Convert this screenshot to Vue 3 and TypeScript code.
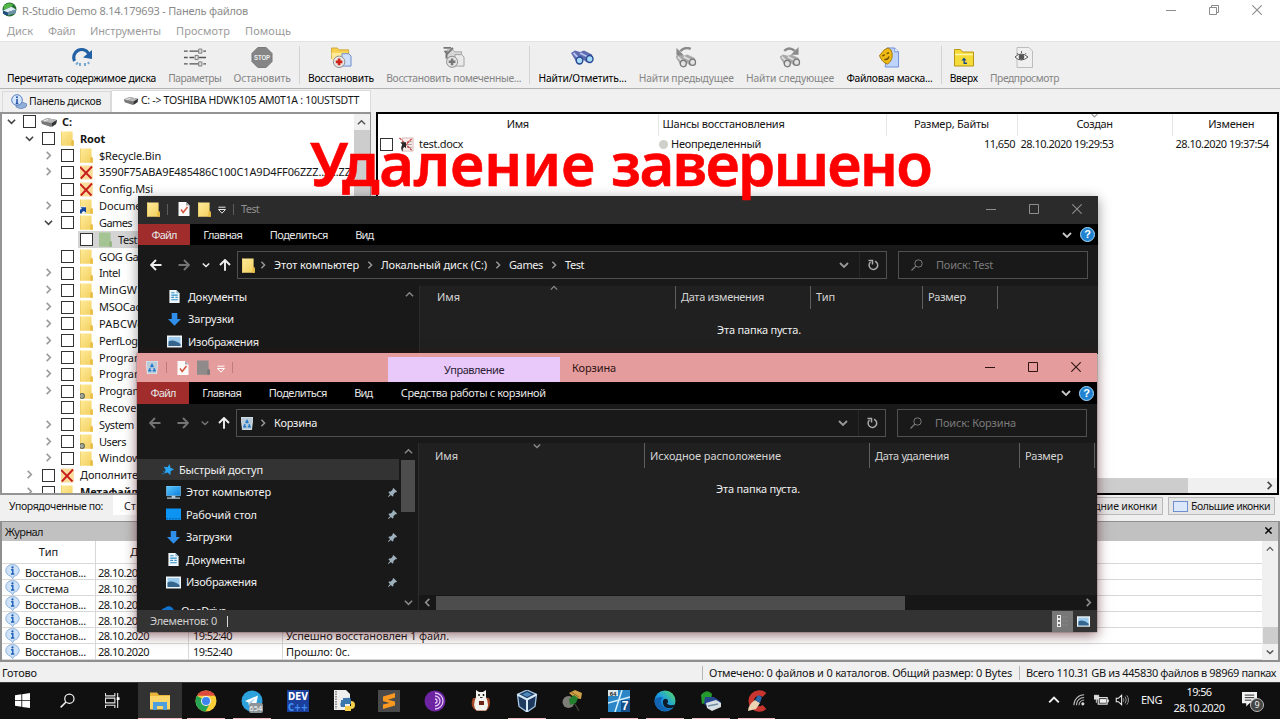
<script setup lang="ts">
interface TreeRow { name: string; level: number; icon: string; arrow: '' | 'open' | 'closed'; bold?: boolean; selected?: boolean; w?: number }
interface Tool { icon: string; label: string; w: number; off?: boolean; sep?: boolean }
interface NavItem { icon: string; name: string; w: number; top?: boolean; cut?: boolean }
interface Column { name: string; w: number }
interface Explorer {
  id: string; title: string; titleW: number; logo: string; qat: string
  context: boolean; crumbs: Column[]; search: string; searchW: number
  nav: NavItem[]; cols: Column[]; back: boolean
}

// Tracks a label so that it occupies the given width in pixels.
const vFit = {
  mounted(el: HTMLElement, binding: { value?: number }) {
    if (!binding.value) return
    const count = (el.textContent ?? '').trim().length
    const range = document.createRange()
    range.selectNodeContents(el)
    const natural = range.getBoundingClientRect().width
    el.style.letterSpacing = `${(binding.value - natural) / count}px`
  },
}

const menu: Column[] = [
  { name: 'Диск', w: 26 }, { name: 'Файл', w: 27 }, { name: 'Инструменты', w: 71 },
  { name: 'Просмотр', w: 54 }, { name: 'Помощь', w: 46 },
]

const tools: Tool[] = [
  { icon: 'refresh-blue', label: 'Перечитать содержимое диска', w: 149 },
  { icon: 'sliders', label: 'Параметры', w: 53, off: true },
  { icon: 'stop', label: 'Остановить', w: 57, off: true },
  { icon: 'recover', label: 'Восстановить', w: 66, sep: true },
  { icon: 'recover-marked', label: 'Восстановить помеченные...', w: 135, off: true },
  { icon: 'binoculars', label: 'Найти/Отметить...', w: 88, sep: true },
  { icon: 'find-prev', label: 'Найти предыдущее', w: 95, off: true },
  { icon: 'find-next', label: 'Найти следующее', w: 88, off: true },
  { icon: 'mask', label: 'Файловая маска...', w: 86 },
  { icon: 'up-folder', label: 'Вверх', w: 28, sep: true },
  { icon: 'preview', label: 'Предпросмотр', w: 69, off: true },
]

const tree: TreeRow[] = [
  { name: 'C:', level: 0, icon: 'drive', arrow: 'open', bold: true, w: 10 },
  { name: 'Root', level: 1, icon: 'folder', arrow: 'open', bold: true, w: 25 },
  { name: '$Recycle.Bin', level: 2, icon: 'folder', arrow: 'closed', w: 62 },
  { name: '3590F75ABA9E485486C100C1A9D4FF06ZZZ..Z...ZZZ', level: 2, icon: 'deleted', arrow: 'closed', w: 258 },
  { name: 'Config.Msi', level: 2, icon: 'deleted', arrow: '', w: 54 },
  { name: 'Documents', level: 2, icon: 'folder-link', arrow: 'closed', w: 58 },
  { name: 'Games', level: 2, icon: 'folder', arrow: 'open', w: 33 },
  { name: 'Test', level: 3, icon: 'folder-green', arrow: '', selected: true, w: 19 },
  { name: 'GOG Games', level: 2, icon: 'folder', arrow: '', w: 60 },
  { name: 'Intel', level: 2, icon: 'folder', arrow: 'closed', w: 21 },
  { name: 'MinGW', level: 2, icon: 'folder', arrow: 'closed', w: 38 },
  { name: 'MSOCache', level: 2, icon: 'folder', arrow: 'closed', w: 54 },
  { name: 'PABCWork', level: 2, icon: 'folder', arrow: 'closed', w: 56 },
  { name: 'PerfLogs', level: 2, icon: 'folder', arrow: 'closed', w: 44 },
  { name: 'Program Files', level: 2, icon: 'folder', arrow: 'closed', w: 71 },
  { name: 'Program Files', level: 2, icon: 'folder', arrow: 'closed', w: 71 },
  { name: 'ProgramData', level: 2, icon: 'folder-gear', arrow: 'closed', w: 67 },
  { name: 'Recovery', level: 2, icon: 'folder', arrow: '', w: 48 },
  { name: 'System', level: 2, icon: 'folder', arrow: 'closed', w: 35 },
  { name: 'Users', level: 2, icon: 'folder-gear', arrow: 'closed', w: 27 },
  { name: 'Windows', level: 2, icon: 'folder', arrow: 'closed', w: 47 },
  { name: 'Дополнительные', level: 1, icon: 'deleted', arrow: 'closed', w: 91 },
  { name: 'Метафайлы', level: 1, icon: 'folder', arrow: 'closed', bold: true, w: 67 },
]

const log = [
  { kind: 'Восстанов...', w: 61, time: '', text: '', tw: 0 },
  { kind: 'Система', w: 44, time: '', text: '', tw: 0 },
  { kind: 'Восстанов...', w: 61, time: '', text: '', tw: 0 },
  { kind: 'Восстанов...', w: 61, time: '', text: '', tw: 0 },
  { kind: 'Восстанов...', w: 61, time: '19:52:40', text: 'Успешно восстановлен 1 файл.', tw: 163 },
  { kind: 'Восстанов...', w: 61, time: '19:52:40', text: 'Прошло: 0с.', tw: 64 },
]

const explorers: Explorer[] = [
  {
    id: 'test', title: 'Test', titleW: 18, logo: 'folder', qat: 'folder', context: false, back: true,
    crumbs: [{ name: 'Этот компьютер', w: 85 }, { name: 'Локальный диск (C:)', w: 106 }, { name: 'Games', w: 34 }, { name: 'Test', w: 19 }],
    search: 'Поиск: Test', searchW: 57,
    nav: [{ icon: 'doc', name: 'Документы', w: 59 }, { icon: 'download', name: 'Загрузки', w: 46 }, { icon: 'picture', name: 'Изображения', w: 71 }],
    cols: [{ name: 'Имя', w: 23 }, { name: 'Дата изменения', w: 83 }, { name: 'Тип', w: 19 }, { name: 'Размер', w: 38 }],
  },
  {
    id: 'bin', title: 'Корзина', titleW: 44, logo: 'bin', qat: 'folder-gray', context: true, back: false,
    crumbs: [{ name: 'Корзина', w: 43 }],
    search: 'Поиск: Корзина', searchW: 81,
    nav: [
      { icon: 'star', name: 'Быстрый доступ', w: 84, top: true },
      { icon: 'computer', name: 'Этот компьютер', w: 85 },
      { icon: 'desktop', name: 'Рабочий стол', w: 71 },
      { icon: 'download', name: 'Загрузки', w: 46 },
      { icon: 'doc', name: 'Документы', w: 59 },
      { icon: 'picture', name: 'Изображения', w: 71 },
      { icon: 'cloud', name: 'OneDrive', w: 45, cut: true },
    ],
    cols: [{ name: 'Имя', w: 23 }, { name: 'Исходное расположение', w: 131 }, { name: 'Дата удаления', w: 74 }, { name: 'Размер', w: 38 }],
  },
]

const ribbon: Column[] = [{ name: 'Главная', w: 39 }, { name: 'Поделиться', w: 58 }, { name: 'Вид', w: 18 }]

const taskbar = [
  { icon: 't-explorer', run: true, active: true }, { icon: 't-chrome', run: true }, { icon: 't-telegram', run: true },
  { icon: 't-dev' }, { icon: 't-python' }, { icon: 't-sublime' }, { icon: 't-tor' }, { icon: 't-bear' },
  { icon: 't-vbox', run: true }, { icon: 't-dropper' }, { icon: 't-win7', run: true }, { icon: 't-edge', run: true },
  { icon: 't-rstudio', run: true }, { icon: 't-ccleaner', run: true },
]
</script>

<template>
  <div class="screen">
    <svg class="defs" aria-hidden="true">
      <defs>
        <linearGradient id="gFolder" x1="0" y1="0" x2="1" y2="1"><stop offset="0" stop-color="#ffeb9c" /><stop offset="1" stop-color="#f2cf5c" /></linearGradient>
        <linearGradient id="gEdge" x1="0" y1="1" x2="1" y2="0"><stop offset="0" stop-color="#0c59a4" /><stop offset=".5" stop-color="#1b9de2" /><stop offset="1" stop-color="#5fe05a" /></linearGradient>
        <linearGradient id="gBlue" x1="0" y1="0" x2="1" y2="1"><stop offset="0" stop-color="#5cc8ff" /><stop offset="1" stop-color="#0a7fdc" /></linearGradient>
      </defs>
      <symbol id="folder" viewBox="0 0 13 15"><path d="M0 .5h11.600v9.200l1.200 1v4H0z" fill="url(#gFolder)" /><path d="M10.300 14.700V10.200l1.300-1.400 1.200 1v4.900z" fill="#e8bd45" /><path d="M.4.500v14" stroke="#e9c95f" stroke-width=".8" /></symbol>
      <symbol id="folder-gray" viewBox="0 0 13 15"><path d="M0 .5h11.600v9.200l1.200 1v4H0z" fill="#8f8b8b" /><path d="M10.300 14.700v-4.500l1.300-1.400 1.200 1v4.900z" fill="#777" /></symbol>
      <symbol id="folder-green" viewBox="0 0 13 15"><path d="M0 .5h11.600v9.200l1.200 1v4H0z" fill="#a5c494" /><path d="M10.300 14.700v-4.500l1.300-1.400 1.200 1v4.900z" fill="#92b381" /></symbol>
      <symbol id="folder-link" viewBox="0 0 13 15"><use href="#folder" /><rect x="-1" y="7.500" width="7" height="7" fill="#eef3fb" /><path d="M-1 14.500q0-4.500 3-4.500l-1.500-1.800H6v5.500L4 12q-2 0-2.500 2.500z" fill="#14469c" /></symbol>
      <symbol id="folder-gear" viewBox="0 0 13 15"><use href="#folder" /><circle cx="2" cy="12" r="2.300" fill="#d8d8c8" stroke="#5c6658" stroke-width="1.300" /><circle cx="2" cy="12" r=".7" fill="#444" /></symbol>
      <symbol id="deleted" viewBox="0 0 13 15"><path d="M0 .5h12.800v14H0z" fill="#fbdc9b" /><path d="M0 2l11.500 11.500M12 1.500L.8 13.500" stroke="#c81e1e" stroke-width="1.900" /></symbol>
      <symbol id="drive" viewBox="0 0 16 10"><path d="M0 4l6-3 10 2-1 4-5 3L1 7z" fill="#777" /><path d="M0 4l6-3 10 2-5 3z" fill="#b9b9b9" /><path d="M11 6l5-3-1 4-4 2.800z" fill="#333" /><path d="M3 4l4-1.500" stroke="#eee" /></symbol>
      <symbol id="info" viewBox="0 0 16 16"><path d="M8 .6a6.800 6.300 0 0 1 1.500 12.500L8.200 15.700 6 13A6.800 6.300 0 0 1 8 .6z" fill="#cfe3f8" stroke="#7ba6d6" stroke-width=".9" /><circle cx="8" cy="3.600" r="1.200" fill="#1d5fb8" /><path d="M6.500 6.200h1.800v4.500M6.300 10.700h3.600" stroke="#1d5fb8" stroke-width="1.500" fill="none" /></symbol>
      <symbol id="disks" viewBox="0 0 16 15"><path d="M5 11l6-3 5 2-1 3-5 2-5-2z" fill="#8faed8" stroke="#4f6fa8" stroke-width=".6" /><circle cx="6" cy="6" r="5.300" fill="#d7e7fb" stroke="#5b7fc0" /><path d="M6 5v4.500M4.700 9.500h2.600" stroke="#2450a8" stroke-width="1.500" /><circle cx="6" cy="3.200" r="1" fill="#2450a8" /></symbol>
      <symbol id="rstudio" viewBox="0 0 16 16"><circle cx="8" cy="8" r="7.400" fill="#24702c" /><path d="M2 4q5-5 10-1L8 7 2 8z" fill="#55b748" /><path d="M1 9l9-4 5 3-1 4-9 2.500-4-2z" fill="#1e4d7b" /><path d="M1 9l9-4 5 3-9 3z" fill="#dfeef2" /><path d="M6 11l9-3-.5 4-8 2.500z" fill="#6d93a5" /></symbol>
      <symbol id="refresh-blue" viewBox="0 0 22 21"><path d="M3.500 14A8 8 0 0 1 17.500 6.300" fill="none" stroke="#2060a4" stroke-width="3.200" /><path d="M12 10.500L21 3v9z" fill="#2060a4" /><path d="M5 17.500l2-2M9 19v-3M14 19v-3M18 17l-1-2" stroke="#77a9d5" stroke-width="2" /></symbol>
      <symbol id="sliders" viewBox="0 0 24 20"><path d="M0 3h4m2 0h10m5 0h3M0 10h4m2 0h5m5 0h8M0 17h4m2 0h10m5 0h3" stroke="#555" stroke-width="1.500" /><path d="M16 .8h3.500v4.500H16zM12 7.800h3.500v4.500H12zM16 14.800h3.500v4.500H16z" fill="#ddd" stroke="#777" /></symbol>
      <symbol id="stop" viewBox="0 0 22 22"><path d="M6.700.5h8.600l6.200 6.200v8.600l-6.200 6.200H6.700L.5 15.300V6.700z" fill="#858585" stroke="#777" /><text x="11" y="14" text-anchor="middle" font-size="8.500" font-weight="700" fill="#ececec" textLength="17" lengthAdjust="spacingAndGlyphs" font-family="Liberation Sans">STOP</text></symbol>
      <symbol id="recover" viewBox="0 0 22 22"><path d="M1 1h6l2 2h10v9H1z" fill="#f6d04e" stroke="#c89a28" stroke-width=".8" /><path d="M1 6h17l-2 9H2z" fill="#ffeb97" /><path d="M12 7h7l2.500 2.500V20H12z" fill="#cfe0fa" stroke="#5e82c5" stroke-width=".9" /><circle cx="9" cy="15.500" r="6" fill="#e8e8e8" stroke="#8a8a8a" /><path d="M9 12v7M5.500 15.500h7" stroke="#cf2318" stroke-width="2.800" /></symbol>
      <symbol id="recover-marked" viewBox="0 0 22 22"><path d="M4 3h6l2 2h7v9H4z" fill="#d6d6d6" stroke="#999" stroke-width=".8" /><path d="M0 1h8M1 4l3 3 6-6M3 4v8" fill="none" stroke="#777" stroke-width="1.800" /><path d="M12 8h7l2.500 2.500V20H12z" fill="#e9e9e9" stroke="#a0a0a0" /><circle cx="9" cy="15.500" r="5.800" fill="#e3e3e3" stroke="#8a8a8a" /><path d="M9 12v7M5.500 15.500h7" stroke="#777" stroke-width="2.600" /></symbol>
      <symbol id="binoculars" viewBox="0 0 23 15"><path d="M0 3l4-2.500 5 1.500 4-1.500 8 4 1 5-6 3-4-3-2 4-4-.5z" fill="#5d6cae" /><path d="M2.500 3l5 5M9 3l8 4" stroke="#b7c2f0" stroke-width="1.800" /><ellipse cx="8.500" cy="10.500" rx="3.300" ry="3.500" fill="#a7dcf7" stroke="#2a4794" stroke-width="1.400" /><ellipse cx="18.700" cy="9" rx="3.300" ry="3.500" fill="#a7dcf7" stroke="#2a4794" stroke-width="1.400" /></symbol>
      <symbol id="bino-gray" viewBox="0 0 23 15"><path d="M0 3l4-2.500 5 1.500 4-1.500 8 4 1 5-6 3-4-3-2 4-4-.5z" fill="#a9a9a9" /><path d="M2.500 3l5 5M9 3l8 4" stroke="#e2e2e2" stroke-width="1.800" /><ellipse cx="8.500" cy="10.500" rx="3.300" ry="3.500" fill="#e2e2e2" stroke="#777" stroke-width="1.400" /><ellipse cx="18.700" cy="9" rx="3.300" ry="3.500" fill="#e2e2e2" stroke="#777" stroke-width="1.400" /></symbol>
      <symbol id="find-prev" viewBox="0 0 22 22"><use href="#bino-gray" y="7" width="22" height="15" /><path d="M16 2Q9-.5 5 4.500" fill="none" stroke="#8a8a8a" stroke-width="2.600" /><path d="M1 1v8h8z" fill="#8a8a8a" /></symbol>
      <symbol id="find-next" viewBox="0 0 22 22"><use href="#bino-gray" y="7" width="22" height="15" /><path d="M5 4Q10-1 16 4" fill="none" stroke="#8a8a8a" stroke-width="2.600" /><path d="M20 0v8h-8z" fill="#8a8a8a" /></symbol>
      <symbol id="mask" viewBox="0 0 22 22"><path d="M9 1h8l4 4v16H7z" fill="#bdd3fb" stroke="#6e8fd8" /><path d="M17 1v4h4" fill="#fff" stroke="#6e8fd8" /><path d="M1 9l5-6 4-2 3 2q3 6-.5 12l-3 3q-6-2-8.500-9z" fill="#efbb16" stroke="#a37505" /><path d="M4 9.500l2.500-1.500M8.500 7L11 6M6 13q4 1 5-3" stroke="#7a5400" stroke-width="1.500" fill="none" /></symbol>
      <symbol id="up-folder" viewBox="0 0 20 18"><path d="M.5 1h6l2 2.500h11v14H.5z" fill="#f6dc3a" stroke="#b99514" /><path d="M1 6h18" stroke="#fff6a8" stroke-width="1.400" /><path d="M7.500 12l2.500-3 2.500 3h-1.700v2H13v1.500H9.500V12z" fill="#174a8c" /></symbol>
      <symbol id="preview" viewBox="0 0 18 21"><path d="M2 .5h12l3.500 3.500v16.500H2z" fill="#efefef" stroke="#bdbdbd" /><path d="M0 10q6-6 13 0-7 6-13 0z" fill="#fff" stroke="#555" /><circle cx="6.500" cy="10" r="2.800" fill="#555" /><path d="M2 6l1 1.500M6.500 4v2M11 6l-1 1.500" stroke="#666" /></symbol>
      <symbol id="word-del" viewBox="0 0 16 16"><rect x="4" y="1" width="11.500" height="14" fill="#faeaea" stroke="#c9a1a1" stroke-width=".7" /><path d="M9 5h5M9 8h5M9 11h5" stroke="#999" /><path d="M1 1l13 13M14 2L8 8" stroke="#cc3636" stroke-width="1.300" stroke-dasharray="3 1" /><path d="M2 5.500h6v6.500L6 10.500q-2 2-1.500 5Q1.500 13 4 8z" fill="#272727" /></symbol>
      <symbol id="doc" viewBox="0 0 12 14"><path d="M.5 0H8l3.500 3.500V14H.5z" fill="#eef6fb" /><path d="M8 0v3.500h3.500z" fill="#8fb4cc" /><path d="M2.500 3H6M2.500 5.500h7M2.500 8h3M7 8h2.500M2.500 10.500h7" stroke="#2d8fc9" stroke-width="1.200" /></symbol>
      <symbol id="doc-check" viewBox="0 0 12 14"><path d="M.5 0H8l3.500 3.500V14H.5z" fill="#fafafa" /><path d="M8 0v3.500h3.500z" fill="#aaa" /><path d="M3 7.500l2.200 3L9.500 5" fill="none" stroke="#d4533b" stroke-width="1.500" /></symbol>
      <symbol id="download" viewBox="0 0 14 14"><path d="M4 0h6v6.500h4L7 13.800 0 6.500h4z" fill="#2f8eea" /></symbol>
      <symbol id="picture" viewBox="0 0 15 12"><path d="M0 0h15v12H0z" fill="#f1f6fa" /><path d="M1.500 1.500h12v9h-12z" fill="#9ccbee" /><path d="M1.500 6q5-3 12 2.500v2h-12z" fill="#35668f" /></symbol>
      <symbol id="star" viewBox="0 0 14 14"><path d="M9 0l.8 4.400 4.200 1.800-4 2.300-.2 4.500-3.200-3L2.500 11l1.800-4L2 3.200l4.400.5z" fill="#2aa4f4" /><path d="M0 12l3-2M1 9l2-1" stroke="#1671b8" /></symbol>
      <symbol id="computer" viewBox="0 0 16 14"><path d="M.5 0h15v10.500H.5z" fill="url(#gBlue)" stroke="#9bd7ff" stroke-width=".6" /><path d="M6 10.500h4v2H6zM1 12.500h14v1.200H1z" fill="#b7cbd9" /></symbol>
      <symbol id="desktop" viewBox="0 0 15 12"><path d="M0 0h15v11.500H0z" fill="#0d93f2" /><path d="M0 10.200h15" stroke="#0a6dbb" stroke-width="1.400" stroke-dasharray="2 1" /></symbol>
      <symbol id="cloud" viewBox="0 0 15 11"><path d="M4 10a3.500 3.500 0 0 1 0-7 5 5 0 0 1 8.500 1.500A3 3 0 0 1 12 10z" fill="#1272cf" /></symbol>
      <symbol id="bin" viewBox="0 0 13 14"><path d="M0 0h13l-1.600 14H1.600z" fill="#b9cbd8" stroke="#eef4f8" stroke-width=".8" /><path d="M5.200 6.500l1.300-2.500 1.300 2.500M4.400 7.800L3.300 10.500h2.400M8.600 7.800l1.100 2.700H7.300" fill="none" stroke="#2077cc" stroke-width="1.700" /></symbol>
      <symbol id="pin" viewBox="0 0 10 10"><path d="M6 0l4 4-1 1-.9-.2L6 7v1.800L5 9.500 3.200 7.700.5 10 0 9.500l2.300-2.700L.5 5l.7-1H3l2.200-2.100L5 1z" fill="#9fb0bd" /></symbol>
      <symbol id="chev-d" viewBox="0 0 10 10"><path d="M1 3l4 4 4-4" fill="none" stroke="currentColor" stroke-width="1.800" /></symbol>
      <symbol id="chev-r" viewBox="0 0 10 10"><path d="M3 1l4 4-4 4" fill="none" stroke="currentColor" stroke-width="1.800" /></symbol>
      <symbol id="chev-l" viewBox="0 0 10 10"><path d="M7 1L3 5l4 4" fill="none" stroke="currentColor" stroke-width="1.800" /></symbol>
      <symbol id="chev-u" viewBox="0 0 10 10"><path d="M1 7l4-4 4 4" fill="none" stroke="currentColor" stroke-width="1.600" /></symbol>
      <symbol id="arrow-l" viewBox="0 0 12 12"><path d="M11.500 6H1.500M6 1L1 6l5 5" fill="none" stroke="currentColor" stroke-width="1.900" /></symbol>
      <symbol id="arrow-r" viewBox="0 0 12 12"><path d="M.5 6h10M6 1l5 5-5 5" fill="none" stroke="currentColor" stroke-width="1.900" /></symbol>
      <symbol id="arrow-u" viewBox="0 0 12 12"><path d="M6 11.800V1.200M1 6l5-5 5 5" fill="none" stroke="currentColor" stroke-width="1.900" /></symbol>
      <symbol id="reload" viewBox="0 0 12 12"><path d="M8 2.200A4.300 4.300 0 1 1 3.500 3" fill="none" stroke="currentColor" stroke-width="1.500" /><path d="M1.500 1.600h4v4" fill="none" stroke="currentColor" stroke-width="1.500" /></symbol>
      <symbol id="lens" viewBox="0 0 12 12"><circle cx="7.500" cy="4.500" r="3.700" fill="none" stroke="currentColor" /><path d="M4.800 7.200L.5 11.500" stroke="currentColor" stroke-width="1.200" /></symbol>
      <symbol id="qat-drop" viewBox="0 0 8 8"><path d="M.5 1.200h7" stroke="currentColor" /><path d="M.5 3.500h7L4 7.200z" fill="none" stroke="currentColor" /></symbol>
      <symbol id="win-min" viewBox="0 0 10 10"><path d="M0 5.500h10" stroke="currentColor" /></symbol>
      <symbol id="win-max" viewBox="0 0 10 10"><path d="M.5.500h9v9h-9z" fill="none" stroke="currentColor" /></symbol>
      <symbol id="win-restore" viewBox="0 0 10 10"><path d="M.5 2.500h7v7h-7zM2.500 2.500v-2h7v7h-2" fill="none" stroke="currentColor" /></symbol>
      <symbol id="win-x" viewBox="0 0 10 10"><path d="M.3.300l9.400 9.400M9.700.300L.3 9.700" stroke="currentColor" stroke-width="1.100" /></symbol>
      <symbol id="close-bold" viewBox="0 0 8 8"><path d="M.5.500l7 7M7.500.500l-7 7" stroke="currentColor" stroke-width="1.600" /></symbol>

      <symbol id="t-start" viewBox="0 0 16 16"><path d="M0 2.300l6.800-1v6.300H0zM7.700 1.200L16 0v7.600H7.700zM0 8.400h6.800v6.300L0 13.700zM7.700 8.400H16V16l-8.300-1.200z" fill="#fff" /></symbol>
      <symbol id="t-task" viewBox="0 0 16 16"><path d="M.5 0v3h10V0M.5 16v-3h10v3M.5 5.500h10v5H.5zM13.500 0v16" fill="none" stroke="#e5e5e5" stroke-width="1.200" /><path d="M12.500 4.500h3v3h-3z" fill="#fff" /></symbol>
      <symbol id="t-explorer" viewBox="0 0 22 22"><path d="M1 2.500h7l2 2.500h11v14H1z" fill="#e9b43a" /><path d="M1 6h20v13.500H1z" fill="#fbd567" /><path d="M4 12h14v8h-4v-4H8v4H4z" fill="#4b9fdc" /></symbol>
      <symbol id="t-chrome" viewBox="0 0 22 22"><circle cx="11" cy="11" r="10.500" fill="#f9cf3a" /><path d="M1.900 5.750A10.500 10.500 0 0 0 10.500 21.500L15 13z" fill="#26a453" /><path d="M1.900 5.750A10.500 10.500 0 0 1 20.100 5.750H11z" fill="#dd4b3e" /><circle cx="11" cy="11" r="5" fill="#f2f2f2" /><circle cx="11" cy="11" r="4" fill="#3f83ee" /></symbol>
      <symbol id="t-telegram" viewBox="0 0 22 22"><circle cx="11" cy="11" r="10.500" fill="#2ca1dc" /><path d="M4 11l13-5.500-2.500 12-4-3-2.500 2-.5-4z" fill="#fff" /><path d="M7.500 12.500l7-4.500-4.500 6z" fill="#a9d4ee" /></symbol>
      <symbol id="t-dev" viewBox="0 0 22 22"><path d="M0 0h22v22H0z" fill="#1c3f9c" /><text x="11" y="10" text-anchor="middle" font-size="11" font-weight="700" fill="#fff" textLength="20" lengthAdjust="spacingAndGlyphs" font-family="DejaVu Sans">DEV</text><text x="11" y="20.500" text-anchor="middle" font-size="11" font-weight="700" fill="#3f8ff0" textLength="20" lengthAdjust="spacingAndGlyphs" font-family="DejaVu Sans">C++</text></symbol>
      <symbol id="t-python" viewBox="0 0 22 22"><path d="M1 0h12l4 4v16H1z" fill="#eee" /><path d="M3 1v18" stroke="#777" stroke-width="1.500" stroke-dasharray="1.500 1" /><path d="M9 11h5V8h-4v2H8v6h3v-4z" fill="#3b76ad" /><path d="M14 8q4-1 4 2v4h-6v3H8q-2-5 2-6h4z" fill="#3b76ad" /><path d="M18 11q4 0 4 4t-4 4v2h-6v-5h6z" fill="#f6cf4b" /></symbol>
      <symbol id="t-sublime" viewBox="0 0 22 22"><path d="M0 0h22v22H0z" fill="#4a4a4a" /><path d="M5 6.500l12-3.500v4.500L10 9.700l7 1.800v4L5 19v-4.500l6.500-1.500L5 11z" fill="#fb9820" /></symbol>
      <symbol id="t-tor" viewBox="0 0 22 22"><circle cx="11" cy="11" r="10.500" fill="#6d24a3" /><path d="M11 3a8 8 0 0 1 0 16M11 6a5 5 0 0 1 0 10M11 9a2 2 0 0 1 0 4" fill="none" stroke="#e4c9f5" stroke-width="1.300" /></symbol>
      <symbol id="t-bear" viewBox="0 0 20 22"><path d="M2 8q-4 9 4 13h9q6-5 3-13z" fill="#a34422" /><path d="M5 0l3 2h4l3-2v7q4 9 0 13.500H5.500Q1 16 5 7z" fill="#f3f1ec" /><circle cx="8" cy="5" r=".9" /><circle cx="12.500" cy="5" r=".9" /><path d="M8 11h5v4H8z" fill="#6b2417" /><path d="M9 7.500h2.500" stroke="#333" /></symbol>
      <symbol id="t-vbox" viewBox="0 0 22 22"><path d="M11 0l9.500 4.500-1.500 12L11 22l-8-5.500L1.500 4.500z" fill="#1d3a5e" stroke="#a9c9e8" stroke-width="1.300" /><path d="M1.500 4.500L11 9.500l9.500-5M11 9.500V22" fill="none" stroke="#d6e9f8" stroke-width="2" /><path d="M6 4.500l5-2.500 5 2.500-5 2.500z" fill="#4d87ba" /></symbol>
      <symbol id="t-dropper" viewBox="0 0 22 22"><circle cx="6.500" cy="12" r="6" fill="#7e7d77" /><path d="M7 3l6-3 7 3-1 6-6-1z" fill="#cfa048" /><path d="M9 2l8 5" stroke="#8b6a2b" /><path d="M7 9l5-4 4 3-2 5-6 2z" fill="#23802c" /><path d="M13 14l4 7" stroke="#45453e" stroke-width="1.200" /></symbol>
      <symbol id="t-win7" viewBox="0 0 22 22"><path d="M0 0h22v22H0z" fill="#2a86c6" /><path d="M0 13l22-6M14 0L7 22" fill="none" stroke="#d6f1fb" stroke-width="1.500" /><path d="M13 10h9v12h-9z" fill="#174f8a" /><path d="M0 0h10v6H0z" fill="#dce6e9" /><text x="5" y="5.500" text-anchor="middle" font-size="6" font-weight="700" fill="#222" font-family="Liberation Sans">64</text><text x="17" y="20" text-anchor="middle" font-size="12" font-weight="700" fill="#fff" font-family="Liberation Sans">7</text></symbol>
      <symbol id="t-edge" viewBox="0 0 22 22"><circle cx="11" cy="11" r="10.500" fill="url(#gEdge)" /><path d="M.5 10Q4 5.500 9 7.500q-4 4 0 9 4 4 10 1.500Q13 24 5 18.500q-5-3.500-4.500-8.500z" fill="#1464b4" /><path d="M9.500 9.500q3-2 4.500 1 .5 2-1 3 2 3 8.500 1-1 3-4 3.500-6 1-8-3-1.500-3 0-5.500z" fill="#0e1c2b" /></symbol>
      <symbol id="t-rstudio" viewBox="0 0 22 22"><path d="M1 5q6-7 11-1l-1 7-9 3z" fill="#249b2c" /><path d="M5 7h9l7 5-2 4-9 2-6-4z" fill="#25468c" /><path d="M6 13l10-3 5 3v4l-9 4-5-3z" fill="#d7e0e5" /><path d="M8 16l10-2" stroke="#708ca0" stroke-width="1.500" /></symbol>
      <symbol id="t-ccleaner" viewBox="0 0 22 22"><path d="M18.500 5A8 8 0 1 0 18.500 17" fill="none" stroke="#c9352f" stroke-width="5.500" /><path d="M9 10l5 3-4 6-8 2q0-6 7-11z" fill="#ecd3b4" /><path d="M9 10l3-5 4 2-2 6z" fill="#2b67a9" /></symbol>
      <symbol id="wifi" viewBox="0 0 14 14"><path d="M1 13A12 12 0 0 1 13 1M4 13a9 9 0 0 1 9-9M7 13a6 6 0 0 1 6-6" fill="none" stroke="#bbb" stroke-width="1.200" /><circle cx="11.500" cy="11.500" r="1.800" fill="#ddd" /></symbol>
      <symbol id="battery" viewBox="0 0 16 12"><path d="M4.500 3.500h9.500v7H4.500zM15.200 5.500v3" fill="none" stroke="#ddd" stroke-width="1.300" /><path d="M6 5h7v4H6z" fill="#eee" /><path d="M0 1h5v4H0zM2.500 5v4" fill="#ddd" stroke="#ddd" /></symbol>
      <symbol id="speaker" viewBox="0 0 16 14"><path d="M.7 5h2.500L7 1.500v11L3.200 9H.7z" fill="none" stroke="#eee" stroke-width="1.200" /><path d="M9 5q1.500 2 0 4M11 3q3 4 0 8M13 1.500q4 5.500 0 11" fill="none" stroke="#aaa" /></symbol>
      <symbol id="notes" viewBox="0 0 16 16"><path d="M0 0h16v12H8l-3.500 3.500V12H0z" fill="#f2f2f2" /><path d="M3 3.300h10M3 6h10M3 8.700h7" stroke="#222" /></symbol>
    </svg>

    <!-- Recovery application -->
    <header class="titlebar">
      <svg class="app-logo"><use href="#rstudio" /></svg>
      <span v-fit="226" class="title">R-Studio Demo 8.14.179693 - Панель файлов</span>
      <div class="win-buttons">
        <svg><use href="#win-min" /></svg><svg><use href="#win-restore" /></svg><svg><use href="#win-x" /></svg>
      </div>
    </header>
    <nav class="menu"><span v-for="m in menu" :key="m.name" v-fit="m.w">{{ m.name }}</span></nav>

    <div class="toolbar">
      <div v-for="t in tools" :key="t.label" class="tool" :class="[{ off: t.off, sep: t.sep }, 'tool-' + t.icon]">
        <svg><use :href="'#' + t.icon" /></svg>
        <span v-fit="t.w">{{ t.label }}</span>
      </div>
    </div>

    <div class="tabs">
      <div class="tab tab-disks"><svg><use href="#disks" /></svg><span v-fit="72">Панель дисков</span></div>
      <div class="tab tab-drive"><svg><use href="#drive" /></svg><span v-fit="218">C: -> TOSHIBA HDWK105 AM0T1A : 10USTSDTT</span></div>
    </div>

    <main class="panels">
      <section class="tree">
        <div class="tree-rows">
          <div v-for="(r, i) in tree" :key="i" class="tree-row" :class="['level-' + r.level, { bold: r.bold, selected: r.selected }]">
            <span class="arrow" :class="r.arrow"><svg v-if="r.arrow"><use :href="r.arrow === 'open' ? '#chev-d' : '#chev-r'" /></svg></span>
            <i class="check" />
            <svg class="tree-icon" :class="r.icon"><use :href="'#' + r.icon" /></svg>
            <span v-fit="r.w">{{ r.name }}</span>
          </div>
        </div>
        <div class="tree-scroll"><svg><use href="#chev-u" /></svg></div>
      </section>
      <section class="files">
        <div class="files-head">
          <span class="name"><b v-fit="22">Имя</b></span><span class="chance"><b v-fit="122">Шансы восстановления</b></span>
          <span><b v-fit="75">Размер, Байты</b></span><span class="sorted"><svg><use href="#chev-d" /></svg><b v-fit="36">Создан</b></span><span class="changed"><b v-fit="46">Изменен</b></span>
        </div>
        <div class="files-row">
          <span class="name"><i class="check" /><svg><use href="#word-del" /></svg><b v-fit="44">test.docx</b></span>
          <span class="chance"><i class="dot" /><b v-fit="90">Неопределенный</b></span>
          <span class="size"><b v-fit="31">11,650</b></span>
          <span class="date"><b v-fit="93">28.10.2020 19:29:53</b></span>
          <span class="date"><b v-fit="93">28.10.2020 19:37:54</b></span>
        </div>
        <div class="files-scroll"><i /><svg><use href="#chev-r" /></svg></div>
      </section>
    </main>

    <div class="views">
      <span class="order"><b v-fit="94">Упорядоченные по:</b></span>
      <span class="order-tab">Структура</span>
      <div class="view-buttons">
        <span class="view-btn mid"><b v-fit="81">Средние иконки</b></span>
        <span class="view-btn"><i /><b v-fit="79">Большие иконки</b></span>
      </div>
    </div>

    <section class="journal">
      <div class="journal-title"><span v-fit="38">Журнал</span><svg><use href="#close-bold" /></svg></div>
      <div class="journal-body">
        <div class="journal-table">
          <div class="log-row head"><span>Тип</span><span>Дата</span><span /><span /></div>
          <div v-for="(l, i) in log" :key="i" class="log-row">
            <span><svg><use href="#info" /></svg><b v-fit="l.w">{{ l.kind }}</b></span>
            <span><b v-fit="51">28.10.2020</b></span>
            <span><b v-fit="39">{{ l.time }}</b></span>
            <span><b v-fit="l.tw">{{ l.text }}</b></span>
          </div>
        </div>
        <div class="journal-scroll"><svg><use href="#chev-u" /></svg><i /><svg><use href="#chev-d" /></svg></div>
      </div>
    </section>

    <footer class="status">
      <span class="ready" v-fit="35">Готово</span>
      <span class="marked"><b v-fit="303">Отмечено: 0 файлов и 0 каталогов. Общий размер: 0 Bytes</b></span>
      <span class="total"><b v-fit="250">Всего 110.31 GB из 445830 файлов в 98969 папках</b></span>
    </footer>

    <!-- Explorer windows -->
    <section v-for="w in explorers" :key="w.id" class="explorer" :class="w.id">
      <div class="x-title">
        <span class="slot logo"><svg class="folder-ic"><use :href="'#' + w.logo" /></svg></span>
        <i class="bar" />
        <span class="slot"><svg class="doc-ic"><use href="#doc-check" /></svg></span>
        <span class="slot"><svg class="folder-ic"><use :href="'#' + w.qat" /></svg></span>
        <svg class="drop"><use href="#qat-drop" /></svg>
        <i class="bar last" />
        <span v-if="w.context" class="context-title"><b v-fit="60">Управление</b></span>
        <span class="x-name" v-fit="w.titleW">{{ w.title }}</span>
        <div class="x-buttons"><svg><use href="#win-min" /></svg><svg><use href="#win-max" /></svg><svg><use href="#win-x" /></svg></div>
      </div>
      <div class="ribbon">
        <span class="file-tab"><b v-fit="25">Файл</b></span>
        <span v-for="r in ribbon" :key="r.name" class="ribbon-tab" v-fit="r.w">{{ r.name }}</span>
        <span v-if="w.context" class="context-tab"><b v-fit="145">Средства работы с корзиной</b></span>
        <svg class="expand"><use href="#chev-d" /></svg>
        <span class="help">?</span>
      </div>
      <div class="address">
        <svg class="nav-arrow" :class="{ on: w.back }"><use href="#arrow-l" /></svg>
        <svg class="nav-arrow"><use href="#arrow-r" /></svg>
        <svg class="recent" :class="{ on: w.back }"><use href="#chev-d" /></svg>
        <svg class="nav-arrow on up"><use href="#arrow-u" /></svg>
        <div class="path">
          <svg class="folder-ic"><use :href="'#' + w.logo" /></svg>
          <template v-for="c in w.crumbs" :key="c.name"><svg class="crumb-sep"><use href="#chev-r" /></svg><span><b v-fit="c.w">{{ c.name }}</b></span></template>
          <svg class="path-drop"><use href="#chev-d" /></svg>
          <span class="reload"><svg><use href="#reload" /></svg></span>
        </div>
        <div class="search"><svg><use href="#lens" /></svg><span v-fit="w.searchW">{{ w.search }}</span></div>
      </div>
      <div class="x-body">
        <div class="x-nav">
          <div v-for="n in w.nav" :key="n.name" class="x-nav-row" :class="{ top: n.top, cut: n.cut }">
            <svg class="nav-ic" :class="n.icon"><use :href="'#' + n.icon" /></svg>
            <span v-fit="n.w">{{ n.name }}</span>
            <svg v-if="w.context && !n.top && !n.cut" class="pin"><use href="#pin" /></svg>
          </div>
        </div>
        <div class="x-scroll"><svg><use href="#chev-u" /></svg><i v-if="w.context" /><svg v-if="w.context"><use href="#chev-d" /></svg></div>
        <div class="x-list">
          <div class="x-cols"><span v-for="(c, i) in w.cols" :key="c.name"><svg v-if="i === 0"><use :href="w.context ? '#chev-d' : '#chev-u'" /></svg><b v-fit="c.w">{{ c.name }}</b></span></div>
          <p><b v-fit="84">Эта папка пуста.</b></p>
          <div v-if="w.context" class="x-hscroll"><svg><use href="#chev-l" /></svg><i /><svg class="end"><use href="#chev-r" /></svg></div>
        </div>
      </div>
      <div v-if="w.context" class="x-status">
        <span v-fit="67">Элементов: 0</span><i class="caret" />
        <em class="details"><svg viewBox="0 0 11 12"><path d="M0 0h4v12H0z" fill="#eee" /><path d="M1 2h2M1 6h2M1 10h2" stroke="#444" stroke-width="1.500" /><path d="M5.500 2H11M5.500 6H11M5.500 10H11" stroke="#8c8c8c" stroke-dasharray="2 1" /></svg></em>
        <em class="thumbs"><svg><use href="#picture" /></svg></em>
      </div>
    </section>

    <div class="caption"><b v-fit="285">Удаление</b><b v-fit="320">завершено</b></div>

    <!-- Taskbar -->
    <footer class="taskbar">
      <span class="sys"><svg><use href="#t-start" /></svg></span>
      <span class="sys search-btn"><svg><use href="#lens" /></svg></span>
      <span class="sys"><svg><use href="#t-task" /></svg></span>
      <div class="apps">
        <span v-for="t in taskbar" :key="t.icon" class="app" :class="{ run: t.run, active: t.active }">
          <svg><use :href="'#' + t.icon" /></svg>
          <small v-if="t.icon === 't-telegram'">654</small>
        </span>
      </div>
      <div class="tray">
        <svg class="t-chev"><use href="#chev-u" /></svg>
        <svg><use href="#wifi" /></svg><svg class="wide"><use href="#battery" /></svg><svg class="wide"><use href="#speaker" /></svg>
        <span class="lang" v-fit="21">ENG</span>
        <span class="clock"><b v-fit="25">19:56</b><b v-fit="51">28.10.2020</b></span>
        <span class="notes"><svg><use href="#notes" /></svg><small>9</small></span>
      </div>
    </footer>
  </div>
</template>

<style>
body { margin: 0; overflow: hidden; }
</style>

<style scoped>
.screen { position: relative; width: 1280px; height: 719px; overflow: hidden; display: flex; flex-direction: column; background: #f0f0f0; color: #161616; font: 11px/14px "Noto Sans", "Open Sans", sans-serif; white-space: nowrap; }
.screen *, .screen *::before { box-sizing: border-box; }
.screen > * { flex: none; }
.defs { position: absolute; width: 0; height: 0; }
svg { display: block; flex: none; overflow: visible; }
b { font-weight: inherit; }
i, em { font-style: normal; }

.titlebar { height: 21px; background: #fff; display: flex; align-items: center; color: #8b8b8b; }
.app-logo { width: 15px; height: 15px; margin: 0 5px 2px 2px; }
.title { margin-top: 1px; }
.win-buttons { margin: -2px 18px 0 auto; display: flex; gap: 33px; }
.win-buttons svg { width: 10px; height: 10px; color: #8c8c8c; }
.menu { height: 20px; padding-left: 7px; background: #fff; display: grid; grid-template-columns: 41px 42px 86px 69px 60px; align-items: center; color: #9c9c9c; }

.toolbar { height: 48px; border-top: 1px solid #e3e3e3; border-bottom: 1px solid #b2b2b2; background: #efefef; display: flex; gap: 12.300px; padding: 5px 0 0 7px; font-size: 10.300px; color: #000; }
.tool { position: relative; display: flex; flex-direction: column; align-items: center; }
.tool svg { width: 22px; height: 21px; }
.tool span { margin-top: 3px; }
.tool.off { color: #858585; }
.tool.sep { margin-left: 5px; }
.tool.sep::before { content: ""; position: absolute; left: -9px; top: -1px; width: 1px; height: 38px; background: #d3d3d3; }
.tool-binoculars svg { height: 15px; margin: 3px 0; width: 23px; }
.tool-up-folder svg { height: 19px; margin: 1px 0; width: 20px; }
.tool-preview svg { width: 18px; }

.tabs { height: 23px; display: flex; align-items: flex-end; padding-left: 2px; font-size: 10.500px; }
.tab { height: 21px; display: flex; align-items: center; border: 1px solid #dadada; border-bottom: 0; padding-bottom: 3px; }
.tab-disks { width: 109px; padding-left: 8px; gap: 2px; padding-bottom: 2px; }
.tab-disks svg { width: 16px; height: 15px; }
.tab-drive { height: 22px; width: 260px; background: #fff; padding-left: 11px; gap: 2px; }
.tab-drive svg { width: 16px; height: 9px; }

.panels { height: 383px; display: flex; gap: 5px; }
.tree { width: 371px; border: 2px solid #949494; border-right-width: 1px; background: #fff; display: flex; overflow: hidden; }
.tree-rows { flex: 1; min-width: 0; overflow: hidden; margin-top: -.5px; }
.tree-row { height: 16.830px; display: flex; align-items: center; padding-left: 3px; overflow: hidden; }
.level-1 { padding-left: 21.500px; }
.level-2 { padding-left: 40px; }
.arrow { width: 12px; height: 10px; margin-right: 6px; color: #9a9a9a; flex: none; display: flex; justify-content: center; }
.level-2 .arrow { margin-right: 7px; }
.arrow.open { color: #444; }
.arrow svg { width: 9px; height: 9px; }
.check { width: 13px; height: 13px; border: 1px solid #333; background: #fff; flex: none; }
.tree-icon { width: 13px; height: 15px; margin: 0 6px 0 6px; }
.level-1 .tree-icon { margin-right: 6.500px; }
.tree-icon.drive { width: 16px; height: 10px; margin: 0 5px 0 5px; }
.bold { font-weight: 700; }
.level-3.selected { padding-left: 0; }
.selected .arrow { width: 72px; }
.selected { background: linear-gradient(90deg, #fff 76px, #d4d4d4 76px); }
.tree-scroll { width: 16px; background: linear-gradient(#f0f0f0 16px, #cdcdcd 16px); padding: 4px 3px; color: #555; }
.tree-scroll svg { width: 9px; height: 9px; }

.files { flex: 1; border: 2px solid #000; background: #fff; display: flex; flex-direction: column; margin-right: 1px; }
.files-head, .files-row { display: grid; grid-template-columns: 280.500px 228px 131px 155px 1fr; }
.files-head { height: 22px; }
.files-head span { display: flex; align-items: center; justify-content: center; border-right: 1px solid #e6e6e6; position: relative; padding-bottom: 2px; }
.files-head .chance { justify-content: flex-start; padding-left: 4px; }
.files-head .sorted svg { position: absolute; top: -2px; width: 7px; height: 7px; color: #999; }
.files-head .changed { padding-left: 13px; border: 0; }
.files-row { height: 16px; }
.files-row span { display: flex; align-items: center; }
.files-row .name { padding-left: 2px; }
.files-row .name svg { width: 16px; height: 15px; margin: 0 5px 0 5px; }
.dot { width: 9px; height: 9px; border-radius: 50%; background: #cfcfcb; margin: 0 3px 0 .5px; }
.files-row .size { justify-content: flex-end; padding-right: 2.500px; }
.files-row .date { padding-left: 3px; }
.files-scroll { height: 15px; margin-top: auto; background: #f0f0f0; display: flex; align-items: center; justify-content: space-between; padding-right: 3px; color: #444; }
.files-scroll i { width: 810px; height: 15px; background: #cdcdcd; }
.files-scroll svg { width: 9px; height: 9px; }

.views { height: 26px; display: flex; font-size: 10.500px; }
.order { width: 113px; padding: 4px 0 0 9px; }
.order-tab { width: 90px; height: 20px; background: #fff; padding: 4px 0 0 11px; letter-spacing: .3px; }
.view-buttons { margin: 2px 5px 0 auto; display: flex; gap: 5px; }
.view-btn { height: 18px; width: 107px; border: 1px solid #b9b9b9; background: #e6e6e6; display: flex; align-items: center; gap: 3px; padding-left: 4px; }
.view-btn.mid { justify-content: flex-end; padding-right: 5px; }
.view-btn i { width: 15px; height: 11px; border: 1px solid #6d92cf; background: #dbe7fb; }

.journal { height: 141px; border: 1px solid #8f8f8f; border-width: 1px 2px 2px; display: flex; flex-direction: column; }
.journal-title { height: 19px; background: #c1c1c1; display: flex; align-items: center; padding: 0 5px 0 3px; }
.journal-title svg { width: 7px; height: 7px; margin: 0 1px 2px auto; color: #000; }
.journal-body { flex: 1; min-height: 0; display: flex; }
.journal-table { flex: 1; background: #fff; overflow: hidden; }
.log-row { height: 15.900px; display: grid; grid-template-columns: 94px 93px 94px 1fr; border-bottom: 1px solid #d8d8d8; }
.log-row span { display: flex; align-items: center; border-right: 1px solid #d8d8d8; padding-left: 3px; min-width: 0; }
.log-row b { margin: 1px 0 -1px; }
.log-row.head { height: 23.400px; }
.log-row.head span { justify-content: center; padding: 0; }
.log-row span:nth-child(2) { padding-left: 2px; }
.log-row span:nth-child(3) { padding-left: 4px; }
.log-row span:last-child { border: 0; }
.log-row svg { width: 15px; height: 15px; margin: -1px 5px -1px 0; }
.journal-scroll { width: 16px; background: #f0f0f0; display: flex; flex-direction: column; align-items: center; padding: 4px 0; color: #555; }
.journal-scroll svg { width: 8px; height: 8px; }
.journal-scroll i { width: 15px; height: 17px; background: #cdcdcd; margin: auto 0 4px; }

.status { height: 20px; display: flex; align-items: center; padding: 2px 4px 0 2px; }
.marked { margin-left: auto; border-left: 1px solid #b5b5b5; padding: 0 7px 0 6px; }
.total { border-left: 1px solid #b5b5b5; padding-left: 6px; }

.explorer { position: absolute; width: 960px; display: flex; flex-direction: column; background: #191919; color: #f0f0f0; box-shadow: 0 3px 12px rgba(0, 0, 0, .42); overflow: hidden; }
.explorer.test { left: 138px; top: 195.500px; height: 158px; }
.explorer.bin { left: 137px; top: 353px; height: 279px; box-shadow: 0 3px 12px rgba(70, 15, 20, .6), 0 0 1px rgba(53, 31, 33, .9); }
.x-title { height: 28.500px; background: #2b2b2b; display: flex; align-items: center; padding: 0 0 1px 8px; color: #8e8e8e; flex: none; }
.slot { width: 21px; display: flex; justify-content: center; }
.slot.logo { width: 14px; }
.folder-ic { width: 13px; height: 15px; }
.doc-ic { width: 12px; height: 14px; }
.bar { width: 1px; height: 11px; background: #5c5c5c; margin: 0 5px 0 7px; }
.drop { width: 8px; height: 8px; color: #e8e8e8; margin: 2px 0 0 3px; }
.bar.last { margin: 0 7px; }
.x-buttons { margin-left: auto; display: flex; }
.x-buttons svg { width: 10px; height: 10px; margin: 0 16px 0 17px; }
.bin .x-title { height: 29px; background: #e49c9c; color: #301414; padding-bottom: 0; }
.bin .x-buttons { margin-bottom: 1px; }
.bin .bar { background: #bf7c7c; }
.bin .drop { color: #fff; }
.bin .logo svg, .bin .path > .folder-ic { height: 13px; width: 12px; }
.bin .path > .folder-ic { margin-right: 2px; }
.context-title { width: 172px; height: 25px; align-self: flex-end; background: #e9c8fa; color: #2d1f36; display: flex; align-items: center; justify-content: center; margin: 0 12px 0 148px; }
.ribbon { height: 21px; background: #000; display: flex; align-items: center; flex: none; color: #e6e6e6; position: relative; }
.bin .ribbon { height: 22px; }
.file-tab { width: 52px; height: 100%; background: #a02c2c; display: flex; align-items: center; justify-content: center; }
.ribbon-tab { margin-left: 27.500px; }
.ribbon-tab:nth-child(2) { margin-left: 13.300px; }
.context-tab { margin-left: 28.500px; }
.expand { width: 10px; height: 10px; margin-left: auto; color: #c9c9c9; }
.help { width: 15px; height: 15px; border-radius: 50%; margin: 0 3px 0 8px; background: #1f83d1; border: 1px solid #a9d8f8; color: #fff; font: 700 11px/13px "Liberation Sans", sans-serif; text-align: center; }
.address { height: 40.500px; display: flex; padding-top: 6px; flex: none; }
.bin .address { height: 39px; padding-top: 5px; }
.nav-arrow { width: 12px; height: 12px; margin: 8px 0 0 12px; color: #747474; }
.nav-arrow + .nav-arrow { margin-left: 15.500px; }
.address .on { color: #f0f0f0; }
.recent { width: 8px; height: 8px; color: #777; margin: 10px 0 0 12px; }
.nav-arrow.up { margin-left: 9.500px; margin-right: 6px; }
.path { width: 650px; height: 28px; border: 1px solid #505050; display: flex; align-items: center; padding-left: 4px; }
.crumb-sep { width: 8px; height: 8px; color: #999; margin: 0 7px; }
.folder-ic + .crumb-sep { margin-left: 4px; }
.path-drop { width: 10px; height: 10px; margin: 0 10px 0 auto; color: #999; }
.reload { width: 27px; height: 26px; border-left: 1px solid #272727; display: flex; align-items: center; justify-content: center; color: #aaa; }
.reload svg { width: 12px; height: 12px; }
.search { width: 190px; height: 28px; margin-left: 10.500px; border: 1px solid #505050; display: flex; align-items: center; gap: 13px; padding-left: 12.500px; color: #7b7b7b; }
.search svg { width: 12px; height: 12px; }
.x-body { flex: 1; min-height: 0; display: flex; }
.x-nav { width: 262px; overflow: hidden; }
.bin .x-nav { padding-top: 16px; }
.x-nav-row { height: 22.500px; display: flex; align-items: center; padding-left: 29px; }
.nav-ic { width: 15px; height: 13px; margin-right: 6px; }
.bin .nav-ic { margin-right: 5px; }
.x-nav-row.top { background: #333; height: 21px; margin-bottom: .9px; padding-left: 25px; }
.x-nav-row.cut { padding: 7px 0 0 24px; height: 28px; }
.x-nav-row .star { width: 12px; height: 12px; }
.pin { width: 9px; height: 9px; margin: 0 2px 0 auto; }
.x-scroll { width: 19px; display: flex; flex-direction: column; align-items: center; padding: 4px 1px 0 0; color: #888; }
.x-scroll svg { width: 9px; height: 9px; }
.x-scroll i { width: 14px; height: 52px; background: #4d4d4d; margin: 4px 0 auto; }
.x-scroll svg:last-child:not(:first-child) { margin-bottom: 3px; }
.x-list { flex: 1; border-left: 1px solid #2c2c2c; background: #202020; display: flex; flex-direction: column; }
.x-cols { display: grid; grid-template-columns: 256px 135px 112px 75px; height: 23.500px; color: #d4d4d4; }
.bin .x-cols { grid-template-columns: 226px 225px 150px 75px; height: 25px; }
.x-cols span { border-right: 1px solid #5f5f5f; padding-left: 5px; display: flex; align-items: center; position: relative; }
.x-cols span:first-child { padding-left: 17px; }
.bin .x-cols span:first-child { padding-left: 16px; }
.x-cols svg { position: absolute; width: 8px; height: 8px; left: calc(50% + 2px); top: -2px; color: #888; }
.bin .x-cols svg { top: -1px; left: calc(50% + 1px); }
.x-list p { margin: 14px 0 0; text-align: center; }
.x-hscroll { height: 15px; margin-top: auto; background: #171717; display: flex; align-items: center; gap: 4px; color: #8f8f8f; padding: 0 4px; }
.x-hscroll svg { width: 9px; height: 9px; }
.x-hscroll i { width: 469px; height: 14px; background: #4d4d4d; }
.x-hscroll .end { margin-left: auto; }
.x-status { height: 22px; background: #333; display: flex; align-items: center; padding-left: 13px; color: #cfcfcf; flex: none; }
.caret { width: 1px; height: 11px; background: #d8d8d8; margin-left: 10px; }
.details { width: 21px; height: 21px; background: #777; display: flex; align-items: center; justify-content: center; margin-left: auto; }
.details svg { width: 11px; height: 12px; }
.thumbs svg { width: 13px; height: 11px; }
.thumbs { margin: 0 7px 0 4px; }

.caption { position: absolute; left: 310px; top: 122px; display: flex; gap: 16px; color: #f00; font: 600 60px/82px "Noto Sans", "Open Sans", sans-serif; -webkit-text-stroke: .6px #f00; }

.taskbar { height: 38px; border-top: 1px solid #3a3a3a; background: #101010; display: flex; color: #f2f2f2; }
.sys { width: 45px; display: flex; align-items: center; justify-content: center; padding-bottom: 3px; }
.sys svg { width: 15px; height: 15px; }
.apps { display: flex; padding-left: 3px; }
.app { position: relative; width: 45.900px; display: flex; justify-content: center; padding: 7px 2px 0 0; }
.app svg { width: 22px; height: 22px; }
.app.run::before { content: ""; position: absolute; left: 3px; right: 5px; bottom: 0; height: 2px; background: #eebcc0; }
.app.active::before { left: 0; right: 2px; }
.app.active { background: linear-gradient(#323232, #323232) 0 0 / 44px 100% no-repeat; }
.app small { position: absolute; left: 19px; top: 20px; width: 14px; height: 10px; border-radius: 2px; background: #8e9599; color: #fff; font-size: 7.500px; line-height: 10px; text-align: center; }
.tray { margin-left: auto; display: flex; align-items: center; padding: 0 23px 4px 0; }
.tray svg { width: 12px; height: 12px; margin-right: 9px; }
.tray .wide { width: 15px; height: 12px; margin-right: 6px; }
.tray .t-chev { width: 12px; margin-right: 13px; }
.lang { margin-left: 5px; }
.clock { width: 74px; display: flex; flex-direction: column; align-items: center; gap: 2px; }
.notes { position: relative; margin-left: 6px; }
.tray .notes svg { width: 15px; height: 15px; margin: 0; }
.notes small { position: absolute; left: 8px; top: 6px; width: 14px; height: 14px; border-radius: 50%; background: #444; border: 1px solid #bbb; font-size: 9px; line-height: 12px; text-align: center; }
</style>
